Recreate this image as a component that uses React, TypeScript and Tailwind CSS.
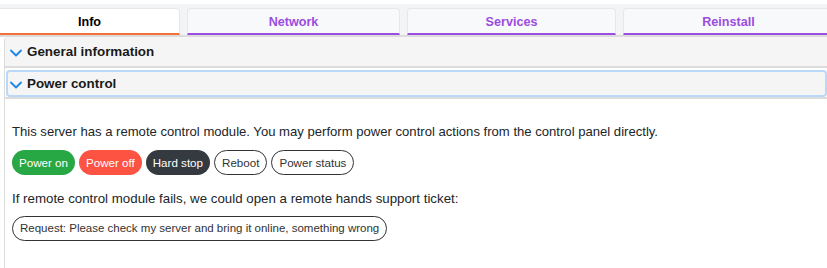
import React from "react";

const Chevron = () => (
  <svg width="12" height="8" viewBox="0 0 12 8" className="shrink-0">
    <path d="M1 1.5 L6 6.5 L11 1.5" fill="none" stroke="#1c86ee" strokeWidth="1.8" strokeLinecap="round" strokeLinejoin="round" />
  </svg>
);

export default function App() {
  const font = { fontFamily: '"Liberation Sans", Arial, sans-serif' };
  return (
    <div className="w-[827px] h-[268px] overflow-hidden bg-white text-[#212529]" style={font}>
      <div className="mt-[4px] pt-[4px] bg-[#f3f4f6] border-b-2 border-b-[#dcdcdc] flex gap-[7px]">
        <div className="shrink-0 w-[180px] h-[27px] pt-[2px] flex items-center justify-center bg-white border-t border-r border-[#e5e7eb] rounded-tr-[4px] border-b-2 border-b-[#f2703c] text-[12.6px] font-bold text-black">
          Info
        </div>
        <div className="shrink-0 w-[213px] h-[27px] pt-[2px] flex items-center justify-center bg-[#f8f9fb] border-t border-x border-[#e5e7eb] rounded-t-[4px] border-b-2 border-b-[#9b4ddf] text-[12.6px] font-bold text-[#9b4ddf]">
          Network
        </div>
        <div className="shrink-0 w-[209px] h-[27px] pt-[2px] flex items-center justify-center bg-[#f8f9fb] border-t border-x border-[#e5e7eb] rounded-t-[4px] border-b-2 border-b-[#9b4ddf] text-[12.6px] font-bold text-[#9b4ddf]">
          Services
        </div>
        <div className="shrink-0 w-[211px] h-[27px] pt-[2px] flex items-center justify-center bg-[#f8f9fb] border-t border-x border-[#e5e7eb] rounded-t-[4px] border-b-2 border-b-[#9b4ddf] text-[12.6px] font-bold text-[#9b4ddf]">
          Reinstall
        </div>
      </div>

      <div className="ml-[4px] h-[31px] pt-[2px] bg-[#f5f5f5] border-l border-[#dcdcdc] rounded-tl-[4px] border-b-2 border-b-[#dcdcdc] flex items-center pl-[5px] gap-[5px]">
        <Chevron />
        <span className="text-[13.4px] font-bold text-[#1a1a1a]">General information</span>
      </div>

      <div className="ml-[4px] border-l border-[#dcdcdc] h-[200px]">
        <div className="pt-[2px] pl-[1px] border-b-2 border-b-[#dcdcdc]">
          <div className="h-[27px] pt-[2px] border-2 border-[#bad9f9] rounded-[4px] bg-[#f5f5f5] flex items-center pl-[2px] gap-[5px]">
            <Chevron />
            <span className="text-[13.4px] font-bold text-[#1a1a1a]">Power control</span>
          </div>
        </div>
        <div className="pl-[7px] pt-[23px]">
          <p className="text-[13.1px] leading-[20px]">
            This server has a remote control module. You may perform power control actions from the control panel directly.
          </p>
          <div className="mt-[8px] flex gap-[4px]">
            <button className="h-[25px] px-[7px] pt-[1px] rounded-full text-[11.6px] bg-[#28a745] text-white">Power on</button>
            <button className="h-[25px] px-[7px] pt-[1px] rounded-full text-[11.6px] bg-[#fd5343] text-white">Power off</button>
            <button className="h-[25px] px-[7px] pt-[1px] rounded-full text-[11.6px] bg-[#343a40] text-white">Hard stop</button>
            <button className="h-[25px] px-[7px] pt-[1px] rounded-full text-[11.6px] bg-white text-[#333] border border-[#333]">Reboot</button>
            <button className="h-[25px] px-[7px] pt-[1px] rounded-full text-[11.6px] bg-white text-[#333] border border-[#333]">Power status</button>
          </div>
          <p className="mt-[14px] text-[13.3px] leading-[20px]">
            If remote control module fails, we could open a remote hands support ticket:
          </p>
          <div className="mt-[7px] flex">
            <button className="h-[25px] px-[7px] pt-[1px] rounded-full text-[11.5px] bg-white text-[#333] border border-[#333]">
              Request: Please check my server and bring it online, something wrong
            </button>
          </div>
        </div>
      </div>
    </div>
  );
}
